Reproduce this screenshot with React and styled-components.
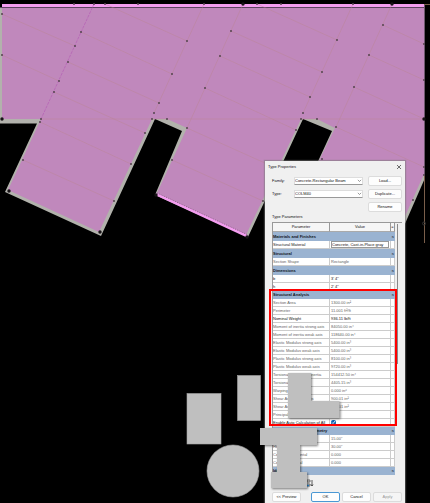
import React from 'react'
import styled, { createGlobalStyle } from "styled-components";

const GlobalStyle = createGlobalStyle`
  * {
    box-sizing: border-box;
  }

  body {
    margin: 0;
    background: #000;
    font-family: "Liberation Sans", Arial, sans-serif;
  }
`;

const groups = [
  {
    title: "Materials and Finishes",
    rows: [{ name: "Structural Material", value: "Concrete, Cast-in-Place gray", kind: "edit" }],
  },
  {
    title: "Structural",
    rows: [{ name: "Section Shape", value: "Rectangle", kind: "locked" }],
  },
  {
    title: "Dimensions",
    rows: [
      { name: "b", value: "3'  4\"" },
      { name: "h", value: "2'  4\"" },
    ],
  },
  {
    title: "Structural Analysis",
    dense: true,
    rows: [
      { name: "Section Area", value: "1300.00 in²", kind: "locked" },
      { name: "Perimeter", value: "11.001 ft²/ft", kind: "locked" },
      { name: "Nominal Weight", value: "936.11 lb/ft" },
      { name: "Moment of inertia strong axis", value: "84050.00 in⁴", kind: "locked" },
      { name: "Moment of inertia weak axis", value: "118640.00 in⁴", kind: "locked" },
      { name: "Elastic Modulus strong axis", value: "5400.00 in³", kind: "locked" },
      { name: "Elastic Modulus weak axis", value: "5400.00 in³", kind: "locked" },
      { name: "Plastic Modulus strong axis", value: "8100.00 in³", kind: "locked" },
      { name: "Plastic Modulus weak axis", value: "9720.00 in³", kind: "locked" },
      { name: "Torsional Moment of Inertia", value: "154412.50 in⁴", kind: "locked" },
      { name: "Torsional Modulus", value: "4405.15 in³", kind: "locked" },
      { name: "Warping Constant", value: "0.000 in⁶", kind: "locked" },
      { name: "Shear Area strong axis", value: "900.01 in²", kind: "locked" },
      { name: "Shear Area weak axis", value: "900.01 in²", kind: "locked" },
      { name: "Principal Axes Angle", value: "", kind: "locked" },
      { name: "Enable Auto Calculation of All", kind: "check" },
    ],
  },
  {
    title: "Structural Section Geometry",
    dense: true,
    rows: [
      { name: "Width", value: "15.00\"", kind: "locked" },
      { name: "Height", value: "30.00\"", kind: "locked" },
      { name: "Centroid Horizontal", value: "0.000", kind: "locked" },
      { name: "Centroid Vertical", value: "0.000", kind: "locked" },
    ],
  },
  { title: "Identity Data", dense: true, rows: [] },
];

const nodes = [
  [2, 14], [2, 55], [74, 4], [94, 4], [105, 4], [138, 4], [204, 4], [257, 4], [281, 4], [353, 4],
  [81, 32], [75, 46], [68, 62], [59, 81], [54, 92], [41, 119], [40, 122],
  [187, 41], [172, 74], [159, 103], [154, 113], [167, 119], [152, 119], [187, 128],
  [231, 31], [220, 56], [205, 88], [337, 40], [322, 72], [310, 97], [303, 113], [296, 130],
  [317, 119], [301, 119], [336, 127], [383, 25], [369, 55], [354, 87], [424, 44], [424, 80],
  [23, 160], [145, 133], [131, 164], [114, 201], [172, 160], [263, 201], [322, 159],
  [413, 200], [424, 167], [424, 175],
];

const bigNodes = [[2, 119], [243, 4], [392, 4], [424, 119], [9, 191], [100, 232], [156, 195], [247, 237]];

const seams = [
  "M2 14L75 46", "M2 55L59 81", "M81 32L172 74", "M68 62L159 103", "M105 4L187 41",
  "M54 92L145 133", "M40 122L131 164", "M23 160L114 201", "M204 4L154 113",
  "M243 4L187 128", "M231 31L322 72", "M220 56L310 97", "M257 4L337 40",
  "M205 88L296 130", "M187 128L276 168", "M172 160L263 201", "M353 4L303 113",
  "M392 4L336 127", "M383 25L424 44", "M369 55L424 80", "M354 87L424 119",
  "M336 127L424 167", "M41 119H424",
];

const FloorPlan = () => {
  return (
    <Plan viewBox="0 0 430 503" preserveAspectRatio="xMinYMin meet" aria-hidden="true">
      <path
        fill="#b2b2ac"
        d="M0 7H425V178L390 258L290 222L332 131L303 119L248 237L155 195L182 131L155 119L101 236L5 192L37 123.500H0Z"
      />
      <path
        fill="#c088bc"
        d="M2 4H424V174L388 254L292 216L335 128L317 119H301L246 235L157 193L187 128L167 119H152L99 232L8 190L41 119H2Z"
      />
      <path fill="#f49ef0" d="M2 4H424V7H2Z" />
      <path stroke="#5c4460" d="M0 7.500H424" />
      <path stroke="#6f586f" d="M424.500 4V178" />
      <path stroke="#f49ef0" strokeWidth="3" d="M156 194L247 236" />
      <path stroke="#6d4a6c" strokeWidth=".7" strokeDasharray="1 1" d="M157 193L248 235" />
      <path stroke="#b98389" strokeWidth=".6" strokeOpacity=".6" fill="none" d={seams.join("")} />
      <path stroke="#b45fb4" strokeWidth=".7" strokeDasharray="3 1" d="M94 4L41 119" />
      <path stroke="#795e4a" d="M424 4.500H430M424.500 176V243" />
      <circle cx="424" cy="223.500" r="1.500" fill="none" stroke="#333" />
      {nodes.map(([x, y]) => (
        <circle key={`${x}-${y}`} cx={x} cy={y} r="1" fill="#54454f" />
      ))}
      {bigNodes.map(([x, y]) => (
        <circle key={`${x}-${y}`} cx={x} cy={y} r="1.700" fill="#171316" />
      ))}
    </Plan>
  )
}

const Shapes = () => {
  return (
    <ShapeLayer viewBox="0 0 430 503" preserveAspectRatio="xMinYMin meet" aria-hidden="true">
      <g fill="#bfbfbf" stroke="#a4a4a4" strokeWidth=".6">
        <rect x="187" y="393.500" width="34" height="50.500" />
        <rect x="237.500" y="375.500" width="23" height="45" />
        <circle cx="233" cy="471" r="26" />
      </g>
      <g className="raised" fill="#bfbfbf">
        <path d="M288 373H311V401H339.500V418H288Z" />
        <path d="M260 428H317V445H300V472H307V488H271V472H277V445H260Z" />
      </g>
    </ShapeLayer>
  )
}

const Picker = ({ id, label, value }) => {
  return (
    <>
      <label htmlFor={id}>{label}</label>
      <SelectBox>
        <select id={id} defaultValue={value}>
          <option>{value}</option>
        </select>
        <svg viewBox="0 0 6 4" aria-hidden="true">
          <path d="M1 1L3 3L5 1" fill="none" stroke="#555" strokeWidth=".7" />
        </svg>
      </SelectBox>
    </>
  )
}

const ParamRow = ({ row }) => {
  return (
    <tr>
      <Cell $locked={row.kind === "locked"}>
        {row.kind === "check" ? <label htmlFor="autoCalc">{row.name}</label> : row.name}
      </Cell>
      <Cell $locked={row.kind === "locked"}>
        {row.kind === "check" && <Tick id="autoCalc" type="checkbox" defaultChecked />}
        {row.kind === "edit" && <ValueInput aria-label={row.name} defaultValue={row.value} />}
        {row.kind !== "check" && row.kind !== "edit" && row.value}
      </Cell>
      <Cell />
    </tr>
  )
}

const App = () => {
  return (
    <Workspace>
      <GlobalStyle />
      <FloorPlan />
      <Dialog role="dialog" aria-labelledby="dialogTitle">
        <TitleBar>
          <span id="dialogTitle">Type Properties</span>
          <CloseButton aria-label="Close">
            <svg viewBox="0 0 6 6" aria-hidden="true">
              <path d="M1 1L5 5M5 1L1 5" stroke="#333" strokeWidth=".7" />
            </svg>
          </CloseButton>
        </TitleBar>
        <TypeForm>
          <Picker id="family" label="Family:" value="Concrete-Rectangular Beam" />
          <Button type="button">Load...</Button>
          <Picker id="type" label="Type:" value="COLM40" />
          <Button type="button">Duplicate...</Button>
          <Button type="button" className="last">Rename</Button>
        </TypeForm>
        <Caption>Type Parameters</Caption>
        <ParamArea>
          <ParamTable>
            <colgroup>
              <col className="name" />
              <col />
              <col className="lock" />
            </colgroup>
            <thead>
              <tr>
                <th>Parameter</th>
                <th>Value</th>
                <th>=</th>
              </tr>
            </thead>
            {groups.map((group) => (
              <tbody key={group.title}>
                <tr>
                  <GroupCell colSpan="3" $dense={group.dense}>
                    <div>
                      <span>{group.title}</span>
                      <span>≈</span>
                    </div>
                  </GroupCell>
                </tr>
                {group.rows.map((row) => (
                  <ParamRow key={row.name} row={row} />
                ))}
              </tbody>
            ))}
          </ParamTable>
          <ScrollThumb />
          <Highlight />
        </ParamArea>
        <Tools>
          <svg viewBox="0 0 8 8" aria-hidden="true">
            <path d="M1 1H4V3H1ZM1 5H4V7H1" fill="none" stroke="#555" strokeWidth=".8" />
            <path d="M0 6.500H3" stroke="#2a8edb" strokeWidth="1.500" />
            <path d="M6 1V7M5 5.500L6 7L7 5.500" fill="none" stroke="#333" strokeWidth=".8" />
          </svg>
        </Tools>
        <Footer>
          <Button>&lt;&lt; Preview</Button>
          <Button $primary>OK</Button>
          <Button>Cancel</Button>
          <Button disabled>Apply</Button>
        </Footer>
      </Dialog>
      <Shapes />
    </Workspace>
  )
}

const Workspace = styled.main`
  position: relative;
  min-height: 100vh;
  overflow: hidden;
  background: #000;
`;

const Plan = styled.svg`
  position: absolute;
  top: 0;
  left: 0;
  width: 430px;
`;

const ShapeLayer = styled(Plan)`
  pointer-events: none;

  .raised {
    filter: drop-shadow(1px 1px 1px rgba(0, 0, 0, 0.5));
  }
`;

const Dialog = styled.section`
  position: absolute;
  top: 161px;
  left: 265px;
  width: 140px;
  display: flex;
  flex-direction: column;
  padding: 0 3px 2px 7px;
  background: #f0f0f0;
  color: #111;
  font-size: 4px;
  line-height: 6px;
  box-shadow: 0 0 1px 1px rgba(120, 120, 120, 0.5);
`;

const TitleBar = styled.header`
  display: flex;
  align-items: center;
  justify-content: space-between;
  height: 12px;
  margin-left: -4px;
`;

const CloseButton = styled.button`
  width: 6px;
  height: 6px;
  padding: 0;
  border: 0;
  background: none;

  svg {
    display: block;
  }
`;

const TypeForm = styled.form`
  display: grid;
  grid-template-columns: 22px 1fr 34px;
  grid-auto-rows: 10px;
  row-gap: 3px;
  align-items: center;
  margin-top: 3px;

  .last {
    grid-column: 3;
  }
`;

const SelectBox = styled.div`
  position: relative;
  margin-right: 5px;

  select {
    display: block;
    width: 100%;
    height: 8px;
    padding: 0;
    appearance: none;
    border: 1px solid #ddd;
    border-bottom-color: #999;
    border-radius: 1px;
    background: #fff;
    color: #111;
    font: inherit;
  }

  svg {
    position: absolute;
    right: 1px;
    top: 2px;
    width: 5px;
  }
`;

const Button = styled.button`
  height: 10px;
  padding: 0;
  border: 1px solid ${({ $primary }) => ($primary ? "#4a98d4" : "#dcdcdc")};
  border-radius: 2px;
  background: #fdfdfd;
  color: #111;
  font: inherit;

  &:disabled {
    background: #f5f5f5;
    color: #999;
  }
`;

const Caption = styled.p`
  margin: 2px 0;
`;

const ParamArea = styled.div`
  position: relative;
  padding-right: 7px;
  border-top: 1px solid #999;
`;

const ParamTable = styled.table`
  width: 100%;
  table-layout: fixed;
  border-collapse: separate;
  border-spacing: 0;
  border-left: 1px solid #999;
  background: #fff;

  .name {
    width: 57px;
  }

  .lock {
    width: 4px;
  }

  th {
    height: 9px;
    padding: 0;
    border-right: 1px solid #999;
    border-bottom: 1px solid #aaa;
    background: #f6f6f6;
    font-weight: normal;
    overflow: hidden;
  }
`;

const GroupCell = styled.td`
  height: ${({ $dense }) => ($dense ? "8px" : "9px")};
  padding: 0 1px 0 0;
  background: #9ab3d1;
  color: #10151c;
  font-weight: bold;

  div {
    display: flex;
    justify-content: space-between;
  }
`;

const Cell = styled.td`
  height: 8px;
  padding: 0 1px 0 0;
  overflow: hidden;
  white-space: nowrap;
  border-right: 1px solid #ccc;
  border-bottom: 1px solid #ccc;
  color: ${({ $locked }) => ($locked ? "#5f5f5f" : "#111")};

  & + & {
    padding-left: 1px;
  }
`;

const ValueInput = styled.input`
  display: block;
  width: 100%;
  height: 7px;
  padding: 0;
  border: 1px solid #999;
  background: #fff;
  color: #111;
  font: inherit;
`;

const Tick = styled.input`
  display: block;
  width: 5px;
  height: 5px;
  margin: 0;
  accent-color: #0c64b4;
`;

const ScrollThumb = styled.div`
  position: absolute;
  top: 1px;
  right: 4px;
  width: 1px;
  height: 140px;
  background: #888;
`;

const Highlight = styled.div`
  position: absolute;
  top: 66px;
  left: -3px;
  right: 5px;
  height: 137px;
  border: 2px solid #f00;
`;

const Tools = styled.div`
  display: flex;
  height: 17px;
  padding: 4px 0 0 34px;

  svg {
    width: 8px;
    height: 8px;
  }
`;

const Footer = styled.footer`
  display: flex;
  justify-content: flex-end;
  gap: 2px;

  button {
    width: 29px;
  }

  button:first-child {
    margin-right: auto;
  }
`;

export default App
